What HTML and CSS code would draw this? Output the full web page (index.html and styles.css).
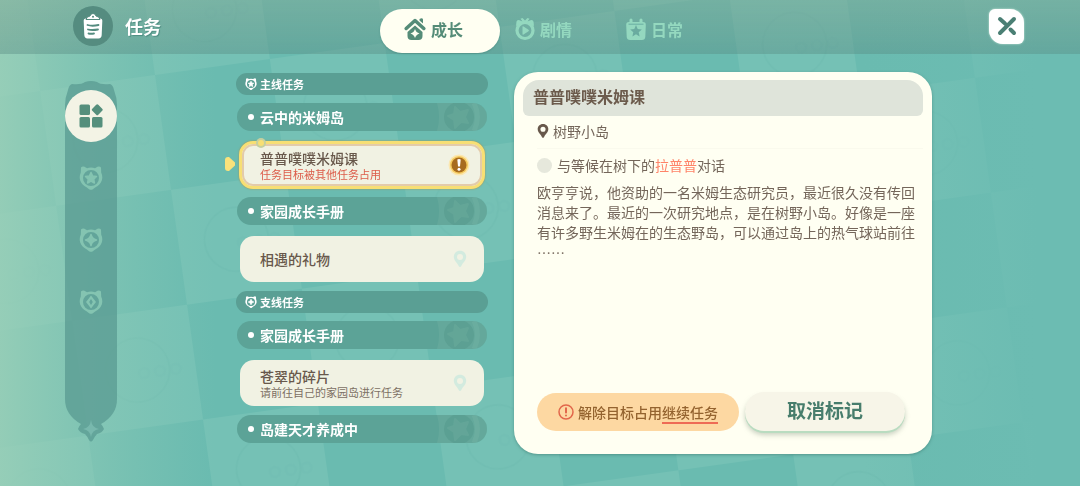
FILE: index.html
```html
<!DOCTYPE html>
<html lang="zh-CN">
<head>
    <meta charset="UTF-8">
    <meta name="viewport" content="width=device-width, initial-scale=1.0">
    <title>任务</title>
    <link rel="stylesheet" href="styles.css">
</head>
<body>

    <!-- Checkered backdrop -->
    <svg class="backdrop" aria-hidden="true">
        <defs>
            <pattern id="checker" width="232" height="232" patternUnits="userSpaceOnUse" patternTransform="matrix(.99 -.138 .138 .99 155 75)">
                <rect x="116" width="116" height="116" fill="#75c1b5"/>
                <rect y="116" width="116" height="116" fill="#75c1b5"/>
                <g fill="none" stroke="#64b2a8" stroke-width="2" opacity=".22">
                    <circle cx="174" cy="58" r="32"/>
                    <circle cx="58" cy="174" r="32"/>
                    <g stroke-width="3" opacity=".6">
                        <circle cx="180" cy="62" r="5"/><circle cx="196" cy="62" r="5"/><circle cx="212" cy="62" r="5"/>
                        <circle cx="64" cy="178" r="5"/><circle cx="80" cy="178" r="5"/><circle cx="96" cy="178" r="5"/>
                    </g>
                </g>
            </pattern>
            <linearGradient id="fade-left">
                <stop offset="0" stop-color="#9bd0b8" stop-opacity=".85"/>
                <stop offset=".2" stop-color="#8ac8b5" stop-opacity="0"/>
            </linearGradient>
            <linearGradient id="fade-right">
                <stop offset=".8" stop-color="#6cbcb2" stop-opacity="0"/>
                <stop offset=".96" stop-color="#6cbcb2"/>
            </linearGradient>
        </defs>
        <rect width="100%" height="100%" fill="#6abbb0"/>
        <rect width="100%" height="100%" fill="url(#checker)"/>
        <rect width="100%" height="100%" fill="url(#fade-left)"/>
        <rect width="100%" height="100%" fill="url(#fade-right)"/>
    </svg>

    <!-- Shared icons -->
    <svg class="symbols" aria-hidden="true">
        <symbol id="badge" viewBox="0 0 24 24">
            <path fill="currentColor" fill-rule="evenodd" d="M2 1.5Q3.400 .2 5.500 .8L8 2.200Q12 1 16 2.200L18.500 .8Q20.600 .2 22 1.500L22.200 6.500Q24 10.500 22.800 14.500Q21 19 16.500 21.200L13.500 23.400Q12 24.200 10.500 23.400L7.500 21.200Q3 19 1.200 14.500Q0 10.500 1.800 6.500ZM12 4A8 8 0 1 0 12 20A8 8 0 1 0 12 4Z"/>
        </symbol>
        <symbol id="star" viewBox="0 0 24 24">
            <path fill="currentColor" stroke="currentColor" stroke-width="1.500" stroke-linejoin="round" d="M12 6.500L13.700 10L17.500 10.500L14.700 13.200L15.400 17L12 15.200L8.600 17L9.300 13.200L6.500 10.500L10.300 10Z"/>
        </symbol>
        <symbol id="spark" viewBox="0 0 24 24">
            <path fill="currentColor" stroke="currentColor" stroke-width="1.500" stroke-linejoin="round" d="M12 6.500Q13 11 17.500 12Q13 13 12 17.500Q11 13 6.500 12Q11 11 12 6.500Z"/>
        </symbol>
        <symbol id="pin" viewBox="0 0 14 18">
            <path fill="currentColor" fill-rule="evenodd" d="M7 0.800C3.200 .8 .8 3.500 .8 6.800C.8 10.600 4 12.500 5.700 16Q7 18 8.300 16C10 12.500 13.200 10.600 13.200 6.800C13.200 3.500 10.800 .8 7 .8ZM7 4A3 3 0 1 1 7 10A3 3 0 1 1 7 4Z"/>
        </symbol>
        <symbol id="emblem" viewBox="0 0 50 28">
            <path fill="#8cc5b4" opacity=".16" d="M0 0H50V28H0Q4 14 0 0Z"/>
            <circle cx="22" cy="14" r="15" fill="#4f9387" opacity=".4"/>
            <path fill="#7fb9aa" stroke="#7fb9aa" stroke-width="2" stroke-linejoin="round" opacity=".22" d="M18 4L23 9L31 7L28 14L31 20L24 19L18 25L17 17L11 13L17 11Z"/>
            <path fill="none" stroke="#8cc5b4" stroke-width="5" opacity=".16" d="M37 0Q44 14 37 28"/>
        </symbol>
    </svg>

    <header class="topbar">
        <div class="brand">
            <span class="brand-icon">
                <svg width="20" height="26" viewBox="0 0 20 26">
                    <path fill="#fff" d="M3 5.500H17Q19.500 5.500 19.300 8L18.700 22Q18.500 25.300 15.500 25.500H4.500Q1.500 25.300 1.300 22L.7 8Q.5 5.500 3 5.500Z"/>
                    <path fill="#fff" stroke="#558c80" d="M3 6.500Q3.500 3.500 7 3Q7.500 .5 10 .5Q12.500 .5 13 3Q16.500 3.500 17 6.500Z"/>
                    <circle cx="10" cy="3.800" r="1" fill="#558c80"/>
                    <path fill="none" stroke="#558c80" stroke-width="1.800" stroke-linecap="round" d="M4.500 12Q9 13.500 15.500 12M5 16.500Q9 17.500 15 16.500M5.500 20.500Q8 21 11 20.500"/>
                </svg>
            </span>
            <h1>任务</h1>
        </div>
        <nav class="tabs">
            <button class="tab active">
                <svg width="22" height="24" viewBox="0 0 22 24">
                    <path fill="none" stroke="currentColor" stroke-width="3.500" stroke-linecap="round" stroke-linejoin="round" d="M2.200 11.500L11 3.500L19.800 11.500"/>
                    <path fill="currentColor" d="M15.500 2Q18.500 .5 19 2.500V6.500L15.500 3.500Z"/>
                    <path fill="currentColor" fill-rule="evenodd" d="M11 8.500L18.500 15V19Q18.500 23 14.500 23H7.500Q3.500 23 3.500 19V15ZM11 12Q12 15.500 15.500 16.500Q12 17.500 11 21Q10 17.500 6.500 16.500Q10 15.500 11 12Z"/>
                </svg>
                成长
            </button>
            <button class="tab">
                <svg width="20" height="24" viewBox="0 0 20 24">
                    <circle cx="10" cy="13.500" r="8" fill="none" stroke="currentColor" stroke-width="3.200"/>
                    <path fill="currentColor" d="M1 9L1.500 4.500Q2.500 2.800 4.500 3.200L7.500 4.500L5.500 1.800L7.500 1L10 3.500L12.500 1L14.500 1.800L12.500 4.500L15.500 3.200Q17.500 2.800 18.500 4.500L19 9L15 7.500Q10 4.500 5 7.500ZM7.500 10Q7.500 9 8.500 9.500L13.500 12.800Q14.500 13.500 13.500 14.200L8.500 17.500Q7.500 18 7.500 17Z"/>
                </svg>
                剧情
            </button>
            <button class="tab">
                <svg width="20" height="24" viewBox="0 0 20 24">
                    <path fill="currentColor" fill-rule="evenodd" d="M3 5H17Q20 5 19.800 8L19.300 20Q19 23 16 23H4Q1 23 .7 20L.2 8Q0 5 3 5ZM10 8L8.300 12L4.200 12.400L7.300 15.200L6.400 19.500L10 17.300L13.600 19.500L12.700 15.200L15.800 12.400L11.700 12Z"/>
                    <path stroke="currentColor" stroke-width="3" stroke-linecap="round" d="M5 3V6M15 3V6"/>
                    <path stroke="#69aea3" d="M2.500 7.200H17.500"/>
                </svg>
                日常
            </button>
        </nav>
        <button class="close" aria-label="关闭">
            <svg width="20" height="20" viewBox="0 0 20 20" fill="none" stroke="#4a7f74" stroke-width="4" stroke-linecap="round">
                <path d="M17 3L3 17M3 3L8 7.500M13.500 13.500L17 17"/>
            </svg>
        </button>
    </header>

    <main class="content">
        <!-- Category rail -->
        <aside class="rail">
            <svg class="rail-shape" viewBox="0 0 52 364" aria-hidden="true">
                <path fill="#579990" fill-opacity=".72" d="M7 3Q16 4 20 1Q26 -1 32 1Q36 4 45 3Q48 4 49 9Q52 17 52 24V318Q52 334 36 343Q38 345 39 348Q37 352 32 353Q30 355 28 359Q26 362 24 359Q22 355 20 353Q15 352 13 348Q14 345 16 343Q0 334 0 318V24Q0 17 3 9Q4 4 7 3Z"/>
                <path fill="#78b8ad" d="M26 339Q27 347 34 348Q27 349 26 356Q25 349 18 348Q25 347 26 339Z"/>
            </svg>
            <button class="rail-button active" aria-label="全部">
                <svg width="24" height="24" viewBox="0 0 24 24" fill="currentColor">
                    <rect x=".5" y=".5" width="10.500" height="10.500" rx="1.500"/>
                    <rect x=".5" y="13" width="10.500" height="10.500" rx="1.500"/>
                    <rect x="13" y="13" width="10.500" height="10.500" rx="1.500"/>
                    <rect x="14" y="1.500" width="8.500" height="8.500" rx="1.500" transform="rotate(45 18.250 5.750)"/>
                </svg>
            </button>
            <button class="rail-button" aria-label="主线任务">
                <svg width="24" height="24"><use href="#badge"/><use href="#star"/></svg>
            </button>
            <button class="rail-button" aria-label="支线任务">
                <svg width="24" height="24"><use href="#badge"/><use href="#spark"/></svg>
            </button>
            <button class="rail-button" aria-label="其他任务">
                <svg width="24" height="24" viewBox="0 0 24 24">
                    <use href="#badge"/>
                    <path fill="currentColor" fill-rule="evenodd" d="M12 5.500Q13.500 7.500 17 12Q13.500 16.500 12 18.500Q10.500 16.500 7 12Q10.500 7.500 12 5.500ZM12 9L10.200 12L12 15L13.800 12Z"/>
                </svg>
            </button>
        </aside>

        <!-- Quest list -->
        <section class="quests">
            <h2 class="group">
                <svg width="12" height="12" viewBox="0 0 24 24"><use href="#badge"/><use href="#star"/></svg>
                主线任务
            </h2>
            <button class="chapter">云中的米姆岛<svg class="emblem"><use href="#emblem"/></svg></button>
            <button class="quest selected">
                <span class="quest-text">
                    <span class="quest-name">普普噗噗米姆课</span>
                    <span class="quest-note warn">任务目标被其他任务占用</span>
                </span>
                <svg width="22" height="22" viewBox="0 0 22 22">
                    <circle cx="11" cy="11" r="10.500" fill="#fbe7b0"/>
                    <circle cx="11" cy="11" r="9" fill="#f4c95c"/>
                    <circle cx="11" cy="11" r="7.500" fill="#a76b1e"/>
                    <path fill="#fff" d="M9.300 5.500Q11 4.500 12.700 5.500L12 12.500H10Z"/>
                    <circle cx="11" cy="15.300" r="1.500" fill="#fff"/>
                </svg>
            </button>
            <button class="chapter">家园成长手册<svg class="emblem"><use href="#emblem"/></svg></button>
            <button class="quest">
                <span class="quest-text">
                    <span class="quest-name">相遇的礼物</span>
                </span>
                <svg class="quest-pin"><use href="#pin"/></svg>
            </button>

            <h2 class="group">
                <svg width="12" height="12" viewBox="0 0 24 24"><use href="#badge"/><use href="#spark"/></svg>
                支线任务
            </h2>
            <button class="chapter">家园成长手册<svg class="emblem"><use href="#emblem"/></svg></button>
            <button class="quest">
                <span class="quest-text">
                    <span class="quest-name">苍翠的碎片</span>
                    <span class="quest-note">请前往自己的家园岛进行任务</span>
                </span>
                <svg class="quest-pin"><use href="#pin"/></svg>
            </button>
            <button class="chapter">岛建天才养成中<svg class="emblem"><use href="#emblem"/></svg></button>
        </section>

        <!-- Quest details -->
        <article class="detail">
            <h2 class="detail-title">普普噗噗米姆课</h2>
            <div class="detail-body">
                <p class="place"><svg width="12" height="16"><use href="#pin"/></svg>树野小岛</p>
                <p class="goal"><span class="goal-dot"></span><span>与等候在树下的<em>拉普普</em>对话</span></p>
                <p class="story">欧亨亨说，他资助的一名米姆生态研究员，最近很久没有传回消息来了。最近的一次研究地点，是在树野小岛。好像是一座有许多野生米姆在的生态野岛，可以通过岛上的热气球站前往<br>……</p>
            </div>
            <div class="actions">
                <button class="release">
                    <svg width="16" height="16" viewBox="0 0 16 16" fill="none" stroke="#e2674b" stroke-linecap="round">
                        <circle cx="8" cy="8" r="7" stroke-width="1.500"/>
                        <path stroke-width="2" d="M8 4.300V8.500M8 11.500V11.600"/>
                    </svg>
                    <span>解除目标占用<u>继续任务</u></span>
                </button>
                <button class="cancel">取消标记</button>
            </div>
        </article>
    </main>

</body>
</html>
```

FILE: styles.css
```css
* {
    box-sizing: border-box;
}
body {
    margin: 0;
    min-height: 100vh;
    display: flex;
    flex-direction: column;
    font-family: "Noto Sans CJK SC", sans-serif;
    font-size: 14px;
    background: #69bab0;
    color: #6e5f52;
}
h1, h2, p {
    margin: 0;
}
button {
    border: none;
    margin: 0;
    padding: 0;
    background: none;
    font: inherit;
    color: inherit;
    cursor: pointer;
}
svg {
    flex: none;
}
.backdrop {
    position: fixed;
    inset: 0;
    width: 100%;
    height: 100%;
    z-index: -1;
}
.symbols {
    position: absolute;
    width: 0;
    height: 0;
}

/* Top bar */
.topbar {
    display: flex;
    align-items: center;
    height: 54px;
    padding: 0 56px 2px 73px;
    background: linear-gradient(rgba(125, 166, 148, 0.5), rgba(88, 138, 130, 0.4));
}
.brand {
    flex: 0 0 307px;
    display: flex;
    align-items: center;
    gap: 12px;
}
.brand-icon {
    display: flex;
    align-items: center;
    justify-content: center;
    width: 40px;
    height: 40px;
    border-radius: 50%;
    background: #558c80;
}
.brand h1 {
    font-size: 18px;
    line-height: 24px;
    color: #fff;
    text-shadow: 1px 1px 1px #4f8d82;
}
.tabs {
    display: flex;
    align-items: center;
    margin-top: 10px;
}
.tab {
    display: flex;
    align-items: center;
    gap: 5px;
    height: 44px;
    padding: 0 27px 4px;
    font-size: 16px;
    font-weight: bold;
    color: #94d8bf;
}
.tab.active {
    width: 120px;
    margin-right: -12px;
    padding-left: 24px;
    border-radius: 22px;
    background: #fffff2;
    color: #558c78;
    box-shadow: 0 1px 2px rgba(60, 120, 110, 0.4);
}
.close {
    display: flex;
    align-items: center;
    justify-content: center;
    width: 35px;
    height: 35px;
    margin-left: auto;
    border-radius: 6px 14px 6px 14px;
    background: #fff;
    box-shadow: 0 0 2px #d8efe4;
}

/* Page columns */
.content {
    flex: 1;
    display: grid;
    grid-template-columns: 145px minmax(0, 252fr) minmax(0, 418fr);
    column-gap: 26px;
    padding: 18px 148px 32px 65px;
}

/* Rail */
.rail {
    position: relative;
    display: flex;
    flex-direction: column;
    gap: 10px;
    padding-top: 18px;
}
.rail-shape {
    position: absolute;
    top: 9px;
    left: 0;
    width: 52px;
    height: 364px;
}
.rail-button {
    position: relative;
    display: flex;
    align-items: center;
    justify-content: center;
    width: 52px;
    height: 52px;
    border-radius: 50%;
    color: #84c4b1;
}
.rail-button.active {
    background: #f3f3e5;
    color: #558f7c;
}

/* Quest list */
.quests {
    display: flex;
    flex-direction: column;
    gap: 8px;
    padding-top: 1px;
}
.group {
    display: flex;
    align-items: center;
    gap: 3px;
    height: 22px;
    padding-left: 9px;
    border-radius: 11px;
    background: #5a9f94;
    font-size: 11px;
    color: #fff;
}
.chapter {
    display: flex;
    align-items: center;
    height: 28px;
    margin: 0 1px;
    padding-left: 11px;
    border-radius: 14px;
    overflow: hidden;
    background: #5ca397;
    font-weight: bold;
    color: #fff;
}
.chapter::before {
    content: "";
    width: 6px;
    height: 6px;
    margin-right: 6px;
    border-radius: 50%;
    background: #fff;
}
.emblem {
    width: 50px;
    height: 28px;
    margin-left: auto;
}
.quest {
    display: flex;
    align-items: center;
    justify-content: space-between;
    height: 46px;
    margin: 3px 4px 1px;
    padding: 0 17px 0 20px;
    border-radius: 14px;
    background: #f1f2e3;
    text-align: left;
}
.quest-text {
    display: flex;
    flex-direction: column;
}
.quest-name {
    font-weight: 500;
    line-height: 18px;
    color: #68584b;
}
.quest-note {
    font-size: 11px;
    line-height: 14px;
    color: #7d7063;
}
.quest-note.warn {
    color: #dc5c4a;
}
.quest-pin {
    width: 14px;
    height: 18px;
    color: #d3ebdf;
}
.quest.selected {
    position: relative;
    height: 48px;
    margin: 2px 3px 0;
    padding: 0 12px 0 18px;
    border: 3px solid #f7df74;
    box-shadow: inset 0 0 0 2px #e3cbaa, 0 0 2px #a58f4c;
}
/* marker to the left of the selected quest */
.quest.selected::before {
    content: "";
    position: absolute;
    left: -17px;
    top: 13px;
    width: 10px;
    height: 14px;
    border-radius: 3px;
    background: #f9e27b;
    clip-path: polygon(0 0, 40% 0, 100% 40%, 100% 60%, 40% 100%, 0 100%);
}
/* bead on the frame */
.quest.selected::after {
    content: "";
    position: absolute;
    left: 16px;
    top: -4px;
    width: 6px;
    height: 6px;
    border-radius: 50%;
    background: #f7df74;
    box-shadow: 0 0 0 2px #c5cf9f;
}

/* Details */
.detail {
    display: flex;
    flex-direction: column;
    padding: 8px 9px 23px;
    border-radius: 24px;
    background: #fffff2;
    box-shadow: 0 1px 3px rgba(50, 110, 100, 0.5);
}
.detail-title {
    height: 36px;
    padding: 0 10px;
    border-radius: 16px 16px 6px 6px;
    background: #dfe4da;
    font-size: 16px;
    line-height: 33px;
    font-weight: bold;
    color: #6c5b4c;
}
.detail-body {
    flex: 1;
    padding: 5px 0 0 14px;
    line-height: 20px;
    color: #74665a;
}
.place {
    display: flex;
    align-items: center;
    gap: 4px;
    padding-bottom: 7px;
    border-bottom: 1px solid #fafaed;
}
.place svg {
    color: #68584b;
}
.goal {
    display: flex;
    align-items: center;
    gap: 5px;
    padding: 6px 0 7px;
}
.goal-dot {
    width: 15px;
    height: 15px;
    border-radius: 50%;
    background: #e6e8dc;
}
.goal em {
    font-style: normal;
    color: #ff8469;
}
.actions {
    display: flex;
    align-items: flex-end;
    gap: 6px;
    padding: 0 18px 0 14px;
}
.release {
    flex: 202;
    display: flex;
    align-items: center;
    justify-content: center;
    gap: 4px;
    height: 38px;
    border-radius: 19px;
    background: #fdd8a2;
    font-weight: 500;
    color: #94632f;
}
.release u {
    text-decoration: none;
    border-bottom: 2px solid #ee6b55;
}
.cancel {
    flex: 160;
    height: 39px;
    padding-bottom: 4px;
    border-radius: 19px;
    background: #f7f5e8;
    box-shadow: 0 2px 0 #b9dcc0, 0 4px 5px rgba(120, 140, 120, 0.4);
    font-size: 19px;
    font-weight: bold;
    color: #477d6c;
}
```
